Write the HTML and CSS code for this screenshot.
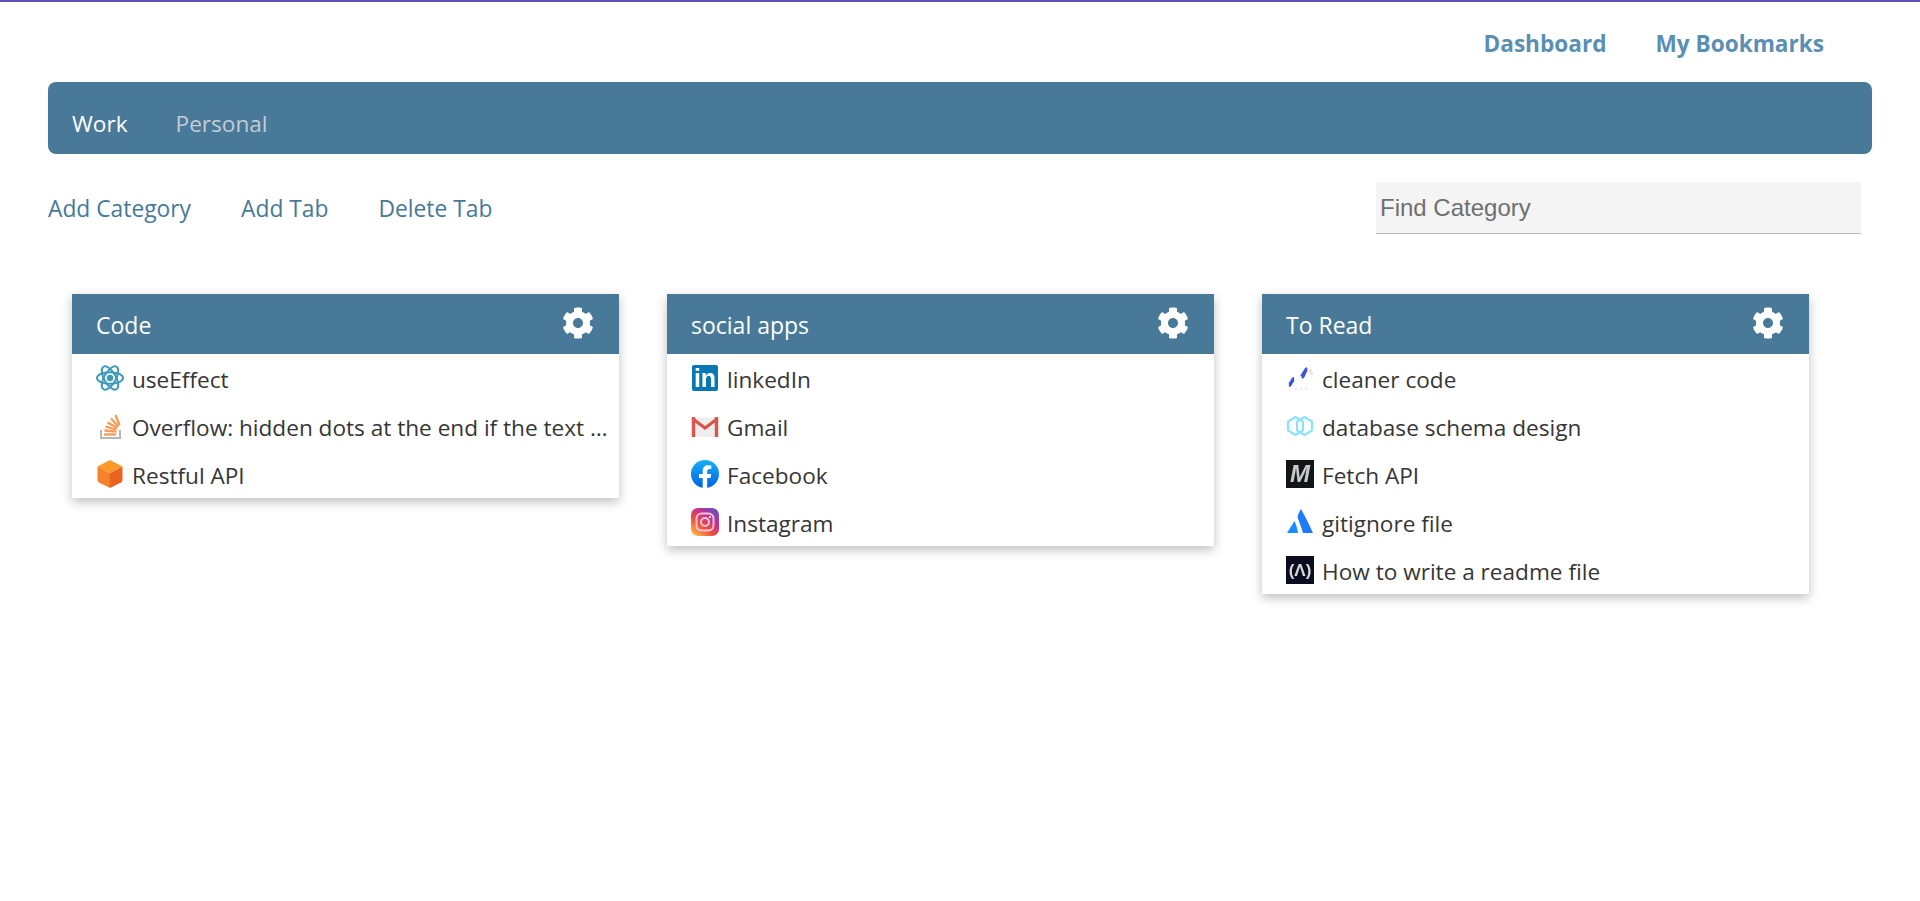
FILE: index.html
```html
<!DOCTYPE html>
<html lang="en">
<head>
  <meta charset="UTF-8">
  <meta name="viewport" content="width=device-width, initial-scale=1.0">
  <title>My Bookmarks</title>
  <link rel="stylesheet" href="styles.css">
</head>
<body>

<svg class="defs" width="0" height="0">
  <defs>
    <symbol id="cog" viewBox="0 0 512 512">
      <path fill="#fff" d="M487.4 315.7l-42.6-24.6c4.3-23.2 4.3-47 0-70.2l42.6-24.6c4.9-2.8 7.1-8.6 5.5-14-11.1-35.6-30-67.8-54.7-94.6-3.8-4.1-10-5.1-14.8-2.3L380.8 110c-17.9-15.4-38.5-27.3-60.8-35.1V25.8c0-5.6-3.9-10.5-9.4-11.7-36.7-8.2-74.3-7.8-109.2 0-5.5 1.2-9.4 6.1-9.4 11.7V75c-22.2 7.9-42.8 19.8-60.8 35.1L88.7 85.5c-4.9-2.8-11-1.9-14.8 2.3-24.7 26.7-43.6 58.9-54.7 94.6-1.7 5.4.6 11.2 5.5 14L67.3 221c-4.3 23.2-4.3 47 0 70.2l-42.6 24.6c-4.9 2.8-7.1 8.6-5.5 14 11.1 35.6 30 67.8 54.7 94.6 3.8 4.1 10 5.1 14.8 2.3l42.6-24.6c17.9 15.4 38.5 27.3 60.8 35.1v49.2c0 5.6 3.9 10.5 9.4 11.7 36.7 8.2 74.3 7.8 109.2 0 5.5-1.2 9.4-6.1 9.4-11.7v-49.2c22.2-7.9 42.8-19.8 60.8-35.1l42.6 24.6c4.9 2.8 11 1.9 14.8-2.3 24.7-26.7 43.6-58.9 54.7-94.6 1.5-5.5-.7-11.3-5.6-14.1zM256 336c-44.1 0-80-35.9-80-80s35.9-80 80-80 80 35.9 80 80-35.9 80-80 80z"/>
    </symbol>
    <linearGradient id="insta" x1="0.1" y1="1" x2="0.9" y2="0">
      <stop offset="0" stop-color="#fdc14e"/>
      <stop offset="0.35" stop-color="#f0513c"/>
      <stop offset="0.65" stop-color="#c7308f"/>
      <stop offset="1" stop-color="#5a55c8"/>
    </linearGradient>
    <linearGradient id="fb" x1="0" y1="0" x2="0" y2="1">
      <stop offset="0" stop-color="#19aef7"/>
      <stop offset="1" stop-color="#0063e0"/>
    </linearGradient>
  </defs>
</svg>

<div class="top-line"></div>

<nav class="main-nav">
  <a href="#">Dashboard</a>
  <a href="#">My Bookmarks</a>
</nav>

<div class="page">
  <div class="tab-bar">
    <a class="tab active" href="#">Work</a>
    <a class="tab" href="#">Personal</a>
  </div>

  <div class="toolbar">
    <a href="#">Add Category</a>
    <a href="#">Add Tab</a>
    <a href="#">Delete Tab</a>
    <input class="find" type="text" placeholder="Find Category">
  </div>

  <div class="categories">

    <section class="card">
      <header class="card-head">
        <span class="title">Code</span>
        <svg class="cog"><use href="#cog"/></svg>
      </header>
      <ul class="links">
        <li>
          <svg class="ico" viewBox="0 0 28 28">
            <g fill="none" stroke="#3d9ab8" stroke-width="2">
              <ellipse cx="14" cy="14" rx="13" ry="5.8"/>
              <ellipse cx="14" cy="14" rx="13" ry="5.8" transform="rotate(60 14 14)"/>
              <ellipse cx="14" cy="14" rx="13" ry="5.8" transform="rotate(120 14 14)"/>
            </g>
            <circle cx="14" cy="14" r="3.2" fill="#3d9ab8"/>
          </svg>
          <span class="name">useEffect</span>
        </li>
        <li>
          <svg class="ico" viewBox="0 0 28 28">
            <path d="M5 18v8h19v-8" fill="none" stroke="#b9b7b2" stroke-width="2"/>
            <g fill="none" stroke="#f79a55" stroke-width="2.300">
              <path d="M8 22.500h12"/>
              <path d="M8.500 18.500l12 1.200"/>
              <path d="M9.500 14.500l11 3"/>
              <path d="M11.500 10.500l10 5.500"/>
              <path d="M15 6.500l7.500 8"/>
              <path d="M19.500 3l4 10"/>
            </g>
          </svg>
          <span class="name">Overflow: hidden dots at the end if the text wraps</span>
        </li>
        <li>
          <svg class="ico" viewBox="0 0 28 28">
            <path d="M14 0l12.500 6.500L14 13 1.500 6.500z" fill="#fb9a2b"/>
            <path d="M1.500 6.500L14 13v15L3 22.500a3 3 0 0 1-1.500-2.500z" fill="#f5822a"/>
            <path d="M26.500 6.500L14 13v15l11-5.500a3 3 0 0 0 1.500-2.500z" fill="#e96423"/>
          </svg>
          <span class="name">Restful API</span>
        </li>
      </ul>
    </section>

    <section class="card">
      <header class="card-head">
        <span class="title">social apps</span>
        <svg class="cog"><use href="#cog"/></svg>
      </header>
      <ul class="links">
        <li>
          <svg class="ico" viewBox="0 0 28 28">
            <rect x="1" y="1" width="26" height="26" rx="2" fill="#0a77b5"/>
            <text class="logo-in" x="14" y="23" text-anchor="middle">in</text>
          </svg>
          <span class="name">linkedIn</span>
        </li>
        <li>
          <svg class="ico" viewBox="0 0 28 28">
            <path d="M2 6h24v19H2z" fill="#eeeeee"/>
            <path d="M2 7l12 9L26 7" fill="none" stroke="#d9534a" stroke-width="3"/>
            <path d="M2.500 5v20M25.500 5v20" stroke="#d9574c" stroke-width="3.500"/>
          </svg>
          <span class="name">Gmail</span>
        </li>
        <li>
          <svg class="ico" viewBox="0 0 28 28">
            <circle cx="14" cy="14" r="14" fill="url(#fb)"/>
            <path d="M19.500 18l.7-4h-4v-2.700c0-1.200.6-2.200 2.300-2.200h1.800V5.600s-1.700-.3-3.200-.3c-3.300 0-5.400 2-5.400 5.600V14H8v4h3.700v10h4.500V18z" fill="#fff"/>
          </svg>
          <span class="name">Facebook</span>
        </li>
        <li>
          <svg class="ico" viewBox="0 0 28 28">
            <rect width="28" height="28" rx="7" fill="url(#insta)"/>
            <rect x="5.500" y="5.500" width="17" height="17" rx="5" fill="none" stroke="#f7c6d6" stroke-width="2"/>
            <circle cx="14" cy="14" r="4" fill="none" stroke="#f7c6d6" stroke-width="2"/>
            <circle cx="19" cy="9" r="1.200" fill="#f7c6d6"/>
          </svg>
          <span class="name">Instagram</span>
        </li>
      </ul>
    </section>

    <section class="card">
      <header class="card-head">
        <span class="title">To Read</span>
        <svg class="cog"><use href="#cog"/></svg>
      </header>
      <ul class="links">
        <li>
          <svg class="ico" viewBox="0 0 28 28">
            <path d="M3 20c3-1 2-5 5-6M3 22c3-1 2-5 5-6" fill="none" stroke="#3f55d8" stroke-width="2.500"/>
            <path d="M15 12c3-2 3-6 6-8M16 14c3-2 2-6 5-8" fill="none" stroke="#3f55d8" stroke-width="2.500"/>
            <path d="M24 5l2 6" stroke="#e4e6ee" stroke-width="3"/>
            <path d="M9 25h2M14 25h2M19 25h2" stroke="#eef0f6" stroke-width="3"/>
          </svg>
          <span class="name">cleaner code</span>
        </li>
        <li>
          <svg class="ico" viewBox="0 0 28 28">
            <g fill="none" stroke="#8be0fb" stroke-width="2.200">
              <path d="M9.500 5l7.500 4.500v9L9.500 23 2 18.500v-9z"/>
              <path d="M18.500 5L26 9.500v9L18.500 23 11 18.500v-9z"/>
            </g>
          </svg>
          <span class="name">database schema design</span>
        </li>
        <li>
          <svg class="ico" viewBox="0 0 28 28">
            <rect width="28" height="28" fill="#141518"/>
            <text class="logo-m" x="14" y="22" text-anchor="middle">M</text>
          </svg>
          <span class="name">Fetch API</span>
        </li>
        <li>
          <svg class="ico" viewBox="0 0 28 28">
            <path d="M15 1c3 5 9 17 12 24H17C15.500 19 12.500 13 11.500 9 12 6 13.500 3 15 1z" fill="#1f7cf6"/>
            <path d="M8.500 13L1 25h11c-.5-4-2-8.500-3.500-12z" fill="#1a8cff"/>
          </svg>
          <span class="name">gitignore file</span>
        </li>
        <li>
          <svg class="ico" viewBox="0 0 28 28">
            <rect width="28" height="28" fill="#0b0c20"/>
            <text class="logo-a" x="14" y="20" text-anchor="middle">(Λ)</text>
          </svg>
          <span class="name">How to write a readme file</span>
        </li>
      </ul>
    </section>

  </div>
</div>

</body>
</html>
```

FILE: styles.css
```css
html {
  height: 100%;
}

body {
  min-height: 100%;
  margin: 0;
  background: #ffffff;
  color: #363636;
  font-family: 'Open Sans', sans-serif;
  font-size: 22.6px;
}

a {
  text-decoration: none;
}

.defs {
  display: block;
  height: 0;
}

.top-line {
  height: 2px;
  background-color: #5f50b5;
}

.main-nav {
  display: flex;
  justify-content: flex-end;
  gap: 49px;
  height: 80px;
  box-sizing: border-box;
  padding: 27px 96px 0 0;
  line-height: 30px;
  font-size: 22.6px;
  font-weight: 700;
}

.main-nav a {
  color: #5a8fb2;
}

.page {
  padding: 0 48px 60px;
}

.tab-bar {
  display: flex;
  align-items: flex-end;
  gap: 48px;
  height: 72px;
  box-sizing: border-box;
  padding: 0 24px 12px;
  background-color: #487998;
  border-radius: 8px;
  line-height: 36px;
  font-size: 22.6px;
}

.tab {
  color: #c4ccd4;
}

.tab.active {
  color: #ffffff;
}

.toolbar {
  display: flex;
  align-items: center;
  gap: 50px;
  margin: 28px 0 0;
  padding-right: 11px;
  font-size: 22.8px;
}

.toolbar a {
  color: #487998;
}

.find {
  width: 485px;
  height: 52px;
  box-sizing: border-box;
  margin-left: auto;
  padding: 0 4px;
  border: 0;
  border-bottom: 1px solid #b4bcc4;
  border-radius: 0;
  background-color: #f4f4f4;
  font-family: 'Liberation Sans', sans-serif;
  font-size: 24px;
  outline: none;
}

.find::placeholder {
  color: #6f6f6f;
  opacity: 1;
}

.categories {
  display: flex;
  align-items: flex-start;
  gap: 48px;
  margin-top: 60px;
  padding-left: 24px;
}

.card {
  width: 547px;
  background-color: #ffffff;
  box-shadow: 0 4px 10px rgba(0, 0, 0, 0.25);
}

.card-head {
  display: flex;
  align-items: center;
  justify-content: space-between;
  height: 60px;
  padding: 0 25px 0 24px;
  background-color: #487998;
  color: #ffffff;
  font-size: 23px;
}

.title {
  padding-top: 2px;
}

.cog {
  width: 32px;
  height: 32px;
  margin-top: -2px;
}

.links {
  list-style: none;
  margin: 0;
  padding: 0;
}

.links li {
  display: flex;
  align-items: center;
  gap: 8px;
  height: 48px;
  padding: 0 6px 0 24px;
}

.ico {
  flex: none;
  width: 28px;
  height: 28px;
  filter: blur(0.4px);
}

.name {
  overflow: hidden;
  padding-top: 2px;
  white-space: nowrap;
  text-overflow: ellipsis;
}

.logo-in {
  fill: #ffffff;
  font-family: 'Liberation Sans', sans-serif;
  font-size: 25px;
  font-weight: 700;
}

.logo-m {
  fill: #c8c8c8;
  font-family: 'Liberation Sans', sans-serif;
  font-size: 24px;
  font-weight: 700;
  font-style: italic;
}

.logo-a {
  fill: #d8d8dc;
  font-family: 'Liberation Sans', sans-serif;
  font-size: 17px;
  font-weight: 700;
}
```
